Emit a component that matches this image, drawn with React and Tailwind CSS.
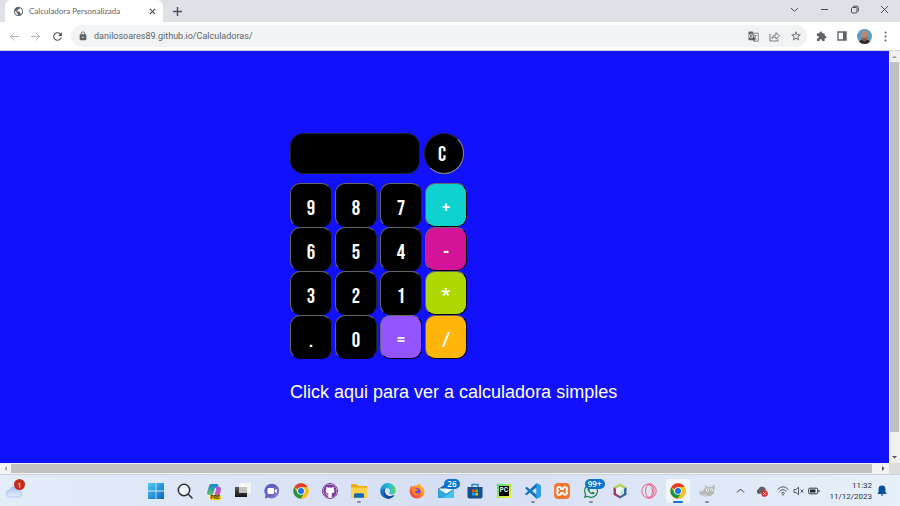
import React from "react";
import { FaGithub, FaWhatsapp } from "react-icons/fa6";
import { SiXampp } from "react-icons/si";
import { MdGTranslate, MdExtension, MdLock, MdPublic, MdRefresh, MdStarBorder } from "react-icons/md";

const KEYS = [
  { k: "9" }, { k: "8" }, { k: "7" }, { k: "+", c: "bg-[#0fd1ce]" },
  { k: "6" }, { k: "5" }, { k: "4" }, { k: "-", c: "bg-[#d31499]" },
  { k: "3" }, { k: "2" }, { k: "1" }, { k: "*", c: "bg-[#add803]" },
  { k: "." }, { k: "0" }, { k: "=", c: "bg-[#9255ff]" }, { k: "/", c: "bg-[#ffb50a]" },
];

const KEY_FONT = "font-['Bebas_Neue','Roboto',sans-serif] text-[21px] leading-[24px] text-white";

function ChromeLogo() {
  return (
    <svg viewBox="0 0 48 48" className="size-4">
      <circle cx="24" cy="24" r="23" fill="#fbc116" />
      <path d="M24 24 4 12.5A23 23 0 0 1 44 12.5H24Z" fill="#e33b2e" />
      <path d="M4 12.5A23 23 0 0 0 23.5 47L34 29.5 24 24 14 29.5Z" fill="#229342" />
      <path d="M24 12.5H44A23 23 0 0 1 23.5 47L34 29.5Z" fill="#fbc116" />
      <circle cx="24" cy="24" r="11.5" fill="#fff" />
      <circle cx="24" cy="24" r="9" fill="#1a73e8" />
    </svg>
  );
}

function WindowsLogo() {
  return (
    <svg viewBox="0 0 16 16" className="size-4">
      <defs><linearGradient id="win" x2="1" y2="1"><stop stopColor="#4fcaf4" /><stop offset="1" stopColor="#0668c4" /></linearGradient></defs>
      <path d="M0 0h7.600v7.600H0zM8.400 0H16v7.600H8.400zM0 8.400h7.600V16H0zM8.400 8.400H16V16H8.400z" fill="url(#win)" />
    </svg>
  );
}

function SearchIcon() {
  return (
    <svg viewBox="0 0 16 16" className="size-4" fill="none" stroke="#2b2f36" strokeWidth="1.5" strokeLinecap="round">
      <circle cx="7" cy="7" r="5.7" fill="#eef2fa" /><path d="m11.3 11.3 3.7 3.7" />
    </svg>
  );
}

function CopilotIcon() {
  return (
    <span className="relative block">
      <svg viewBox="0 0 16 16" className="size-4">
        <defs>
          <linearGradient id="copa" y2="1" x2="0"><stop stopColor="#1f7ed8" /><stop offset="1" stopColor="#5fc45c" /></linearGradient>
          <linearGradient id="copb" y2="1" x2="0"><stop stopColor="#a45be8" /><stop offset="1" stopColor="#f0558c" /></linearGradient>
        </defs>
        <path d="M5 1h6q1 0 1.500 2l.5 2H9L7.500 10q-.6 2-2 2H3Q.6 12 1.200 9L3 3Q3.600 1 5 1Z" fill="url(#copa)" />
        <path d="M10 4h3q2.500 0 2 3l-1 4q-.6 3-3 3H6q2 0 2.500-2L10 7Z" fill="url(#copb)" />
      </svg>
      <span className="absolute -bottom-px left-1 rounded-xs bg-[#ffc60a] px-px font-['Inter',sans-serif] text-[5px] leading-[5px] font-bold text-[#3d3110]">PRE</span>
    </span>
  );
}

function TaskViewIcon() {
  return (
    <svg viewBox="0 0 16 16" className="size-4">
      <defs><linearGradient id="tv" y2="1" x2="0"><stop stopColor="#555" /><stop offset="1" stopColor="#161616" /></linearGradient></defs>
      <path d="M0 4h12v10H0z" fill="url(#tv)" /><path d="M4 0h12v10H4z" fill="#f5f5f3" /><path d="M4 4h8v6H4z" fill="#c2c2c2" />
    </svg>
  );
}

function ChatIcon() {
  return (
    <svg viewBox="0 0 16 16" className="size-4">
      <defs><linearGradient id="chat" x2="1" y2="1"><stop stopColor="#5059c9" /><stop offset=".6" stopColor="#6f62be" /><stop offset="1" stopColor="#a08fe0" /></linearGradient></defs>
      <path d="M8 .7A7.300 7.300 0 1 1 4.500 14.500L.8 15.400 1.600 12A7.300 7.300 0 0 1 8 .7Z" fill="url(#chat)" />
      <rect x="3.5" y="5" width="6.5" height="6" rx="1" fill="#fff" /><path d="m10.600 7.300 2.200-1.500v4.500l-2.200-1.500Z" fill="#fff" />
    </svg>
  );
}

function FolderIcon() {
  return (
    <svg viewBox="0 0 16 16" className="size-4">
      <path d="M0 2q0-.8.8-.8h5L7.500 3H15q1 0 1 1v10q0 .8-.8.8H.8Q0 14.800 0 14Z" fill="#f0a810" />
      <path d="M0 4.500h16V14q0 .8-.8.8H.8Q0 14.800 0 14Z" fill="#fdd04b" />
      <path d="M3 14.800v-3q0-1.600 1.600-1.600h6.800q1.600 0 1.600 1.600v3Z" fill="#1268b8" />
    </svg>
  );
}

function EdgeIcon() {
  return (
    <svg viewBox="0 0 16 16" className="size-4">
      <defs>
        <linearGradient id="ed1" x2="1" y2="0"><stop stopColor="#188ed9" /><stop offset=".6" stopColor="#2bbfd2" /><stop offset="1" stopColor="#64d85c" /></linearGradient>
        <linearGradient id="ed2" x2="1" y2="1"><stop stopColor="#1787d4" /><stop offset="1" stopColor="#0a4b94" /></linearGradient>
      </defs>
      <path d="M.2 8A7.800 7.800 0 0 1 15.800 7.500c.2 3-2 4-4 4s-3-.8-2.300-1.700C11 7 9 5 6 5 3 5 1 6.500.2 8Z" fill="url(#ed1)" />
      <path d="M.2 8C1 6 3 4.700 6 4.900 3.500 7.500 4.500 13 9.700 13.300c2 .1 3.600-.5 4.800-1.200A7.800 7.800 0 0 1 .2 8Z" fill="url(#ed2)" />
      <path d="M6 5C3.500 7.500 5 12 9 12.900c3 .4 5-.3 5.500-.8-1 2-3.500 3.700-6.500 3.700C4 15 2 8 6 5Z" fill="#114f9c" />
    </svg>
  );
}

function FirefoxIcon() {
  return (
    <svg viewBox="0 0 16 16" className="size-4">
      <defs><linearGradient id="ff" x1="1" x2="0" y2="1"><stop stopColor="#ffdf3e" /><stop offset=".45" stopColor="#ff8b24" /><stop offset="1" stopColor="#f0245e" /></linearGradient></defs>
      <path d="M9.500.3c2 1.400 3 2.600 3.500 4l.7-.6c4 5 1 11.800-5.500 11.800A7.400 7.400 0 0 1 .6 8.200C.5 5.500 1.600 3.600 2.600 2.200L3.300 4q1.200-1.300 3-1.200Q9 2.700 9.500.3Z" fill="url(#ff)" />
      <circle cx="8" cy="8.7" r="3.6" fill="#8541d8" /><path d="M3.300 5.200Q5.300 4.400 7 6l2 .5Q8.500 8 6.500 8q-1 2 1.500 2.500 1.500.3 3-1-1 3.500-4.200 3Q2.800 11 3.300 5.200Z" fill="#ff8b24" />
    </svg>
  );
}

function MailIcon() {
  return (
    <svg viewBox="0 0 16 16" className="size-4">
      <path d="M0 6 8 1l8 5v9H0Z" fill="#0f67b5" /><path d="m1 6.500 7 4.500 7-4.500-1-1H2Z" fill="#eef8fd" />
      <path d="M0 6v9h16Z" fill="#2fa5df" /><path d="M16 6v9H5Z" fill="#47c1ee" />
    </svg>
  );
}

function StoreIcon() {
  return (
    <svg viewBox="0 0 16 16" className="size-4">
      <path d="M5 4V1.500h6V4" fill="none" stroke="#1d83d2" strokeWidth="1.3" />
      <path d="M.5 4h15v9.500q0 2-2 2h-11q-2 0-2-2Z" fill="#164f8c" />
      <path d="M5 6.500h2.700v2.700H5z" fill="#f25022" /><path d="M8.300 6.500H11v2.700H8.300z" fill="#7fba00" />
      <path d="M5 9.800h2.700v2.700H5z" fill="#19a8f0" /><path d="M8.300 9.800H11v2.700H8.300z" fill="#ffb900" />
    </svg>
  );
}

function PyCharmIcon() {
  return (
    <span className="flex size-[14px] items-center justify-center bg-linear-to-br from-[#21d789] via-[#a6e84a] to-[#f6f23c]">
      <span className="size-[10px] bg-black pl-px font-['Inter',sans-serif] text-[6px] leading-[7px] font-bold text-white">PC</span>
    </span>
  );
}

function CodeIcon() {
  return (
    <svg viewBox="0 0 16 16" className="size-4">
      <path d="M11.500.3 15 2q.7.400.7 1v10q0 .6-.7 1l-3.500 1.700L1 6 0 5l1.500-1.200L11.600 11.500V4.500L1.500 12.200 0 11l1-1Z" fill="#1673bd" />
      <path d="M11.500.3 15 2q.7.400.7 1v10q0 .6-.7 1l-3.500 1.700Z" fill="#2b9eea" />
    </svg>
  );
}

function NetBeansIcon() {
  return (
    <svg viewBox="0 0 16 16" className="size-4">
      <path d="m8 .5 6.500 3.700L8 8 1.500 4.200Z" fill="#b4cf54" /><path d="M1.500 4.200 8 8v7.500l-6.500-3.700Z" fill="#a33b68" /><path d="M14.500 4.200 8 8v7.500l6.500-3.700Z" fill="#2e6b9e" />
      <path d="m8 3.300 4 2.400v4.800l-4 2.400-4-2.400V5.700Z" fill="#f4f7f7" /><path d="m8 8 4-2.300v4.800l-4 2.400Z" fill="#d1e4dc" />
    </svg>
  );
}

function OperaIcon() {
  return (
    <svg viewBox="0 0 16 16" className="size-4" fill="none" stroke="#ee5a82">
      <circle cx="8" cy="8" r="7.2" /><ellipse cx="8" cy="8" rx="3.4" ry="6.5" /><path d="M8 1.500q5 0 5 6.500t-5 6.500" />
    </svg>
  );
}

function GimpIcon() {
  return (
    <svg viewBox="0 0 16 16" className="size-4">
      <path d="M6 5 6.500 2l2.500 2q2-.4 4 0L15.500.8q.6 4-.3 6.200.4 4-2.700 5.500-4.500 1.500-8-.5L1 12 .3 7.500q2 1.500 3.700.5Q4.800 6 6 5Z" fill="#b7b9bb" />
      <circle cx="8.5" cy="7" r="1.7" fill="#f0f1f3" /><circle cx="12.6" cy="6.8" r="1.5" fill="#f0f1f3" />
      <circle cx="8.7" cy="7" r=".7" fill="#888" /><circle cx="12.4" cy="7" r=".6" fill="#888" />
      <path d="m1.500 12 3-1.300 5 1.200-3 2.100Z" fill="#c8c9ca" />
    </svg>
  );
}

function Badge({ children }) {
  return <span className="absolute -top-1 right-[-6px] rounded-full bg-[#0a73d1] px-[3px] font-['Open_Sans',sans-serif] text-[8px] leading-[10px] font-semibold text-white">{children}</span>;
}

const APPS = [
  { name: "Iniciar", icon: <WindowsLogo /> },
  { name: "Pesquisar", icon: <SearchIcon /> },
  { name: "Copilot", icon: <CopilotIcon /> },
  { name: "Visão de tarefas", icon: <TaskViewIcon /> },
  { name: "Chat", icon: <ChatIcon /> },
  { name: "Chrome", icon: <ChromeLogo /> },
  { name: "GitHub", icon: <FaGithub className="size-4 rounded-full border border-[#7b3aa0] bg-white text-[#7b3aa0]" /> },
  { name: "Explorador", icon: <FolderIcon />, running: true },
  { name: "Edge", icon: <EdgeIcon /> },
  { name: "Firefox", icon: <FirefoxIcon /> },
  { name: "Email", icon: <MailIcon />, badge: "26" },
  { name: "Store", icon: <StoreIcon /> },
  { name: "PyCharm", icon: <PyCharmIcon /> },
  { name: "VS Code", icon: <CodeIcon />, running: true },
  { name: "XAMPP", icon: <SiXampp className="size-4 rounded-sm bg-white text-[#ee7430]" /> },
  { name: "WhatsApp", icon: <FaWhatsapp className="size-4 text-[#12814a]" />, badge: "99+", running: true },
  { name: "NetBeans", icon: <NetBeansIcon /> },
  { name: "Opera", icon: <OperaIcon /> },
  { name: "Chrome ativo", icon: <ChromeLogo />, active: true },
  { name: "GIMP", icon: <GimpIcon />, running: true },
];

function BrowserHeader() {
  return (
    <header className="shrink-0 font-['Roboto',sans-serif] text-[#5f6368]">
      <div className="flex h-[22px] items-end justify-between bg-[#dee1e6]">
        <div className="flex h-full items-center pl-[5px]">
          <div className="flex h-full w-[158px] items-center rounded-t-md bg-white pr-[6px] pl-2">
            <MdPublic className="size-[11px] shrink-0" />
            <span className="ml-[5px] flex-1 font-['Lato',sans-serif] text-[8px] whitespace-nowrap">Calculadora Personalizada</span>
            <button aria-label="Fechar guia" className="p-px">
              <svg viewBox="0 0 8 8" className="size-[7px]" stroke="#4c5055" strokeWidth="1.3"><path d="m1 1 6 6M7 1 1 7" /></svg>
            </button>
          </div>
          <button aria-label="Nova guia" className="ml-[10px]">
            <svg viewBox="0 0 9 9" className="size-[9px]" stroke="#4c5055" strokeWidth="1.4"><path d="M4.500 0v9M0 4.500h9" /></svg>
          </button>
        </div>
        <div className="flex h-full items-center gap-[21px] pr-[11px] pb-[3px]">
          <button aria-label="Pesquisar guias"><svg viewBox="0 0 9 9" className="size-[9px]" fill="none" stroke="#4c5055"><path d="m1 3 3.500 3.500L8 3" /></svg></button>
          <button aria-label="Minimizar"><svg viewBox="0 0 9 9" className="size-[9px]" stroke="#4c5055"><path d="M1 4.500h7" /></svg></button>
          <button aria-label="Restaurar"><svg viewBox="0 0 9 9" className="size-[9px]" fill="none" stroke="#4c5055"><rect x="1.5" y="2.5" width="5.5" height="5.5" rx="1" /><path d="M3 1.200h4q1.300 0 1.300 1.300v4" /></svg></button>
          <button aria-label="Fechar"><svg viewBox="0 0 9 9" className="size-[9px]" stroke="#4c5055"><path d="m1 1 7 7M8 1 1 8" /></svg></button>
        </div>
      </div>
      <div className="flex h-[29px] items-center border-b border-[#cfd2e4] bg-white pr-[11px] pl-[9px]">
        <div className="flex w-[62px] items-center gap-[10px]">
          <button aria-label="Voltar"><svg viewBox="0 0 11 11" className="size-[11px]" fill="none" stroke="#b6b9bd"><path d="M10 5.500H1.500M5.500 1.500l-4 4 4 4" /></svg></button>
          <button aria-label="Avançar"><svg viewBox="0 0 11 11" className="size-[11px]" fill="none" stroke="#b6b9bd"><path d="M1 5.500h8.500M5.500 1.500l4 4-4 4" /></svg></button>
          <button aria-label="Recarregar"><MdRefresh className="size-[13px] text-[#4c5055]" /></button>
        </div>
        <div className="flex h-[22px] flex-1 items-center rounded-full bg-[#f1f3f4] pr-[5px] pl-[7px]">
          <MdLock className="size-[10px] shrink-0" />
          <input aria-label="Endereço" defaultValue="danilosoares89.github.io/Calculadoras/" className="ml-[6px] min-w-0 flex-1 bg-transparent text-[9px] leading-[12px] outline-none" />
          <div className="flex items-center gap-[10px]">
            <button aria-label="Traduzir"><MdGTranslate className="size-[11px]" /></button>
            <button aria-label="Compartilhar"><svg viewBox="0 0 11 11" className="size-[11px]" fill="none" stroke="#6b6f74" strokeWidth=".9"><path d="M1 3v7h8V8M2.800 7.500Q3.500 4 7 3.800V1.500l3.500 3.500L7 8V6Q4.500 5.700 2.800 7.500Z" /></svg></button>
            <button aria-label="Favoritar"><MdStarBorder className="size-[12px]" /></button>
          </div>
        </div>
        <div className="flex items-center gap-[10px] pl-[9px]">
          <button aria-label="Extensões"><MdExtension className="size-[11px]" /></button>
          <button aria-label="Painel lateral"><svg viewBox="0 0 10 10" className="size-[10px]"><path d="M1 1h8v8H1z" fill="none" stroke="#5f6368" strokeWidth="1.3" /><path d="M6 1h3v8H6z" fill="#5f6368" /></svg></button>
          <button aria-label="Perfil">
            <svg viewBox="0 0 15 15" className="size-[15px]">
              <defs><clipPath id="face"><circle cx="7.5" cy="7.5" r="7.5" /></clipPath></defs>
              <g clipPath="url(#face)"><path d="M0 0h15v15H0z" fill="#5b9cc0" /><path d="M1 15q1-4 4.500-4.500h4Q13 11 14 15Z" fill="#30262a" /><ellipse cx="7.5" cy="6.5" rx="3.3" ry="4.7" fill="#b98a71" /><path d="M4.500 8q3 2 6 0-.3 4-3 4.500-2.500-.5-3-4.500Z" fill="#865d4c" /></g>
            </svg>
          </button>
          <button aria-label="Menu"><svg viewBox="0 0 3 11" className="h-[11px] w-[7px]" fill="#5f6368"><circle cx="1.5" cy="1.5" r="1" /><circle cx="1.5" cy="5.5" r="1" /><circle cx="1.5" cy="9.5" r="1" /></svg></button>
        </div>
      </div>
    </header>
  );
}

function Calculator() {
  return (
    <div className="mx-auto w-[320px] pt-[82px]">
      <div className="flex gap-[4px]">
        <input aria-label="Visor" readOnly className="h-[41px] w-[130px] rounded-[13px] border border-[#22221f] bg-black px-2 text-right text-white outline-none" />
        <button className={"h-[41px] w-[40px] rounded-full border border-t-[#262626] border-r-[#888] border-b-[#888] border-l-[#262626] bg-black pt-[2px] pr-[4px] " + KEY_FONT}>C</button>
      </div>
      <div className="mt-[9px] grid w-[177px] grid-cols-4 gap-x-[3px]">
        {KEYS.map(({ k, c }) => (
          <button key={k} className={"h-[44px] rounded-[10px] border pt-[8px] " + (c ? "border-t-[#666] border-r-black border-b-black border-l-[#666] " + c : "border-t-[#666] border-r-[#222] border-b-black border-l-[#666] bg-black") + " " + KEY_FONT}>{k}</button>
        ))}
      </div>
      <a href="#simples" className="mt-[23px] block font-['Liberation_Sans',Arial,sans-serif] text-[18px] leading-[20px] whitespace-nowrap text-white">Click aqui para ver a calculadora simples</a>
    </div>
  );
}

function Arrow({ d, off }) {
  return <svg viewBox="0 0 11 11" className="size-[11px] shrink-0" fill={off ? "#a0a0a0" : "#505050"}><path d={d} /></svg>;
}

function Taskbar() {
  return (
    <footer className="flex h-8 shrink-0 items-center border-t border-[#cfd2dc] bg-linear-to-r from-[#e3edf8] via-[#d6def3] to-[#e6f0f9] font-['Open_Sans',sans-serif] text-[#2d3238]">
      <div className="w-[141px] pl-[6px]">
        <button aria-label="Clima" className="relative block">
          <svg viewBox="0 0 17 17" className="size-[17px]"><defs><linearGradient id="cloud" y2="1" x2="0"><stop stopColor="#a9c6f2" /><stop offset="1" stopColor="#e2edfb" /></linearGradient></defs><path d="M4 15a3.500 3.500 0 0 1-.3-7A4.800 4.800 0 0 1 12.800 8.500 3.300 3.300 0 0 1 13 15Z" fill="url(#cloud)" stroke="#8fb1e6" strokeWidth=".6" /></svg>
          <span className="absolute -top-[3px] left-2 size-[11px] rounded-full bg-[#c42b1c] text-center text-[8px] leading-[11px] text-white">1</span>
        </button>
      </div>
      <div className="flex h-full flex-1 items-center justify-center">
        {APPS.map((a) => (
          <button key={a.name} aria-label={a.name} className="relative flex h-full w-[29px] items-center justify-center">
            <span className={"flex size-6 items-center justify-center rounded-[3px] " + (a.active ? "bg-[#f2f6fc]" : "")}>
              <span className="relative">
                {a.icon}
                {a.badge && <Badge>{a.badge}</Badge>}
              </span>
            </span>
            {a.running && <span className="absolute bottom-[3px] h-[2px] w-1 rounded-full bg-[#888d96]" />}
            {a.active && <span className="absolute bottom-[3px] h-[2px] w-[10px] rounded-full bg-[#1a6fc9]" />}
          </button>
        ))}
      </div>
      <div className="flex w-[179px] items-center justify-end pr-[13px]">
        <svg viewBox="0 0 9 9" className="mr-[11px] size-[9px]" fill="none" stroke="currentColor"><path d="M1 6.500 4.500 3 8 6.500" /></svg>
        <svg viewBox="0 0 12 12" className="mr-[9px] size-[12px]"><path d="M2.500 9A2.700 2.700 0 0 1 2.500 4a4 4 0 0 1 7.500.5L7 8Z" fill="#606468" /><circle cx="8.5" cy="8.5" r="3.3" fill="#df3038" /><path d="m7.300 7.300 2.400 2.400M9.700 7.300 7.300 9.700" stroke="#fff" /></svg>
        <svg viewBox="0 0 12 10" className="mr-[4px] h-[10px] w-[12px]" fill="none" stroke="#454b52" strokeWidth=".9"><path d="M.6 3.500q5.400-5.500 10.800 0M2.400 5.500q3.600-3.600 7.200 0M4.200 7.300q1.800-1.700 3.600 0" /><circle cx="6" cy="8.7" r=".5" /></svg>
        <svg viewBox="0 0 12 10" className="mr-[3px] h-[10px] w-[12px]" fill="none" stroke="#454b52" strokeWidth=".9"><path d="M1 3.500h2l2.500-2.300v7.600L3 6.500H1ZM7.500 3.500l3 3M10.500 3.500l-3 3" /></svg>
        <svg viewBox="0 0 12 8" className="mr-[9px] h-[8px] w-[12px]"><rect x=".7" y="1.2" width="9" height="5.6" rx="1" fill="none" stroke="#33383e" /><path d="M2 2.500h5.500v3H2zM10.500 3h1v2h-1z" fill="#22262b" /></svg>
        <div className="text-right font-['Roboto',sans-serif] text-[8px] leading-[11px] whitespace-nowrap">
          <div>11:32</div>
          <div>11/12/2023</div>
        </div>
        <svg viewBox="0 0 10 11" className="ml-[5px] h-[11px] w-[10px]" fill="#0a4f9f"><path d="M5 .5a3.400 3.400 0 0 1 3.400 3.400V6.500L9.500 9h-9l1.100-2.500V3.900A3.400 3.400 0 0 1 5 .5ZM3.600 9.500h2.800q-.3 1.200-1.400 1.200T3.600 9.500Z" /></svg>
      </div>
    </footer>
  );
}

export default function App() {
  return (
    <div className="flex h-screen flex-col overflow-hidden">
      <BrowserHeader />
      <div className="flex min-h-0 flex-1">
        <main className="min-w-0 flex-1 overflow-hidden bg-[#1111fd] pl-[11px]"><Calculator /></main>
        <div className="flex w-[11px] flex-col bg-[#f1f1f1]">
          <Arrow off d="M3 7 5.500 4.500 8 7Z" />
          <div className="mx-px mb-[20px] flex-1 bg-[#c1c1c1]" />
          <Arrow d="M3 4 5.500 6.500 8 4Z" />
        </div>
      </div>
      <div className="flex h-[11px] shrink-0 bg-[#f1f1f1]">
        <Arrow off d="M7 3 4.500 5.500 7 8Z" />
        <div className="my-px mr-[6px] flex-1 bg-[#c1c1c1]" />
        <Arrow d="M4 3 6.500 5.500 4 8Z" />
        <div className="w-[11px] bg-[#dcdcdc]" />
      </div>
      <Taskbar />
    </div>
  );
}
